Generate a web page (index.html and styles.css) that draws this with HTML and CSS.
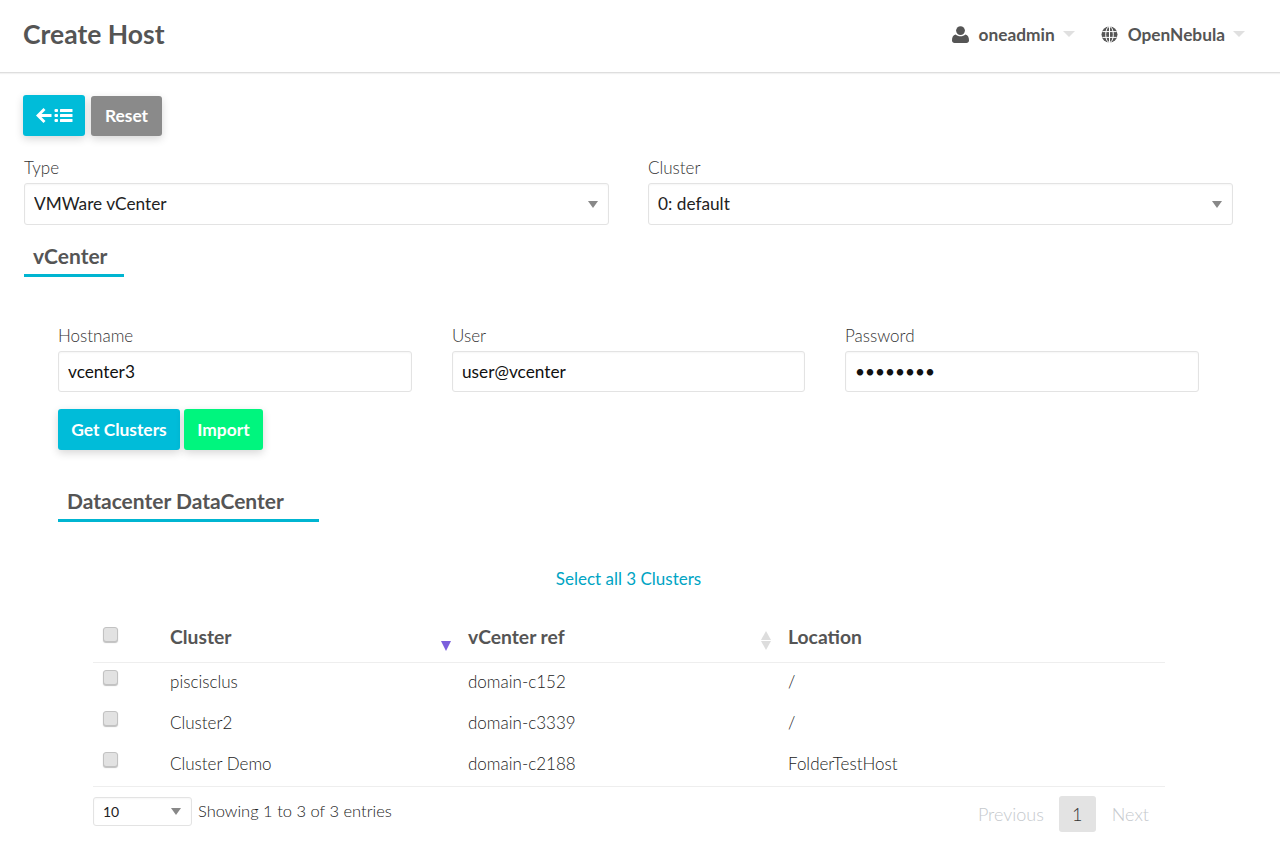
FILE: index.html
```html
<!DOCTYPE html>
<html lang="en">
<head>
  <meta charset="UTF-8" />
  <title>Create Host</title>
  <link rel="stylesheet" href="styles.css">
</head>
<body>

  <header class="topbar">
    <h1>Create Host</h1>
    <nav class="usermenu">
      <span class="menu-item">
        <svg class="menu-icon" viewBox="0 0 17 17" width="17" height="17">
          <circle cx="8.5" cy="4.6" r="4.4" fill="#555"/>
          <path d="M0 14.5c0-3 1-5.5 3.6-6 1.2 1.2 3 1.8 4.9 1.8s3.700-.6 4.900-1.800c2.600.5 3.600 3 3.600 6 0 1.600-1.100 2.500-2.600 2.500H2.600C1.100 17 0 16.100 0 14.500z" fill="#555"/>
        </svg>
        <span class="menu-label">oneadmin</span>
        <span class="menu-caret"></span>
      </span>
      <span class="menu-item">
        <svg class="menu-icon" viewBox="0 0 17 17" width="17" height="17">
          <circle cx="8.500" cy="8.500" r="8" fill="#555"/>
          <g fill="none" stroke="#fff" stroke-width="1">
            <ellipse cx="8.500" cy="8.500" rx="3.800" ry="8"/>
            <path d="M8.500 .5v16M1.300 5.600h14.400M1.300 11.400h14.400"/>
          </g>
        </svg>
        <span class="menu-label">OpenNebula</span>
        <span class="menu-caret"></span>
      </span>
    </nav>
  </header>

  <main class="content">
    <div class="actions">
      <button class="btn btn-back" aria-label="Back to list">
        <svg viewBox="0 0 37 15" width="37" height="15">
          <path d="M7.500 0l2 2-4 4H15.500v3H5.500l4 4-2 2L0 7.500z" fill="#fff"/>
          <g fill="#fff">
            <rect x="18.500" y="1" width="3.500" height="3" rx="1"/>
            <rect x="18.500" y="6" width="3.500" height="3" rx="1"/>
            <rect x="18.500" y="11" width="3.500" height="3" rx="1"/>
            <rect x="24" y="1" width="12.500" height="3" rx=".5"/>
            <rect x="24" y="6" width="12.500" height="3" rx=".5"/>
            <rect x="24" y="11" width="12.500" height="3" rx=".5"/>
          </g>
        </svg>
      </button>
      <button class="btn btn-reset">Reset</button>
    </div>

    <div class="type-row">
      <div class="field">
        <label for="hostType">Type</label>
        <div class="select-wrap">
          <select id="hostType"><option>VMWare vCenter</option></select>
        </div>
      </div>
      <div class="field">
        <label for="hostCluster">Cluster</label>
        <div class="select-wrap">
          <select id="hostCluster"><option>0: default</option></select>
        </div>
      </div>
    </div>

    <h2 class="section-title vcenter-title">vCenter</h2>

    <section class="vcenter">
      <div class="cred-row">
        <div class="field">
          <label for="hostname">Hostname</label>
          <input id="hostname" type="text" value="vcenter3" />
        </div>
        <div class="field">
          <label for="vcUser">User</label>
          <input id="vcUser" type="text" value="user@vcenter" />
        </div>
        <div class="field">
          <label for="vcPass">Password</label>
          <input id="vcPass" type="password" value="password" />
        </div>
      </div>

      <div class="cred-actions">
        <button class="btn btn-get">Get Clusters</button>
        <button class="btn btn-import">Import</button>
      </div>

      <h2 class="section-title dc-title">Datacenter DataCenter</h2>

      <a class="select-all" href="#">Select all 3 Clusters</a>

      <div class="table-box">
        <table class="clusters">
          <thead>
            <tr>
              <th class="col-check"><input type="checkbox" /></th>
              <th class="col-cluster">Cluster<span class="sort-desc"></span></th>
              <th class="col-ref">vCenter ref<span class="sort-both"></span></th>
              <th>Location</th>
            </tr>
          </thead>
          <tbody>
            <tr>
              <td class="col-check"><input type="checkbox" /></td>
              <td>piscisclus</td>
              <td>domain-c152</td>
              <td>/</td>
            </tr>
            <tr>
              <td class="col-check"><input type="checkbox" /></td>
              <td>Cluster2</td>
              <td>domain-c3339</td>
              <td>/</td>
            </tr>
            <tr>
              <td class="col-check"><input type="checkbox" /></td>
              <td>Cluster Demo</td>
              <td>domain-c2188</td>
              <td>FolderTestHost</td>
            </tr>
          </tbody>
        </table>

        <div class="table-footer">
          <div class="length">
            <div class="select-wrap select-small">
              <select><option>10</option></select>
            </div>
            <span class="info">Showing 1 to 3 of 3 entries</span>
          </div>
          <div class="pager">
            <span class="page-link">Previous</span>
            <span class="page-current">1</span>
            <span class="page-link page-next">Next</span>
          </div>
        </div>
      </div>
    </section>
  </main>

</body>
</html>
```

FILE: styles.css
```css
* {
  box-sizing: border-box;
}

body {
  margin: 0;
  font-family: Lato, 'Open Sans', sans-serif;
  font-size: 16px;
  background: #fff;
  color: #555;
}

/* top bar */
.topbar {
  height: 73px;
  padding: 0 35px 4px 23px;
  display: flex;
  align-items: center;
  justify-content: space-between;
  border-bottom: 1px solid #dedede;
  box-shadow: 0 1px 1px rgba(0,0,0,0.05);
}

.topbar h1 {
  margin: 0;
  font-size: 26.500px;
  font-weight: 700;
  color: #555;
}

.usermenu {
  display: flex;
  gap: 26px;
}

.menu-item {
  display: flex;
  align-items: center;
  font-weight: 700;
  font-size: 17.300px;
}

.menu-icon {
  margin-right: 10px;
}

.menu-caret {
  width: 0;
  height: 0;
  margin-left: 8px;
  border-left: 6.500px solid transparent;
  border-right: 6.500px solid transparent;
  border-top: 6.500px solid #e0e0e0;
}

/* buttons */
.content {
  padding: 22px 47px 0 23px;
}

.actions {
  display: flex;
  align-items: flex-end;
  gap: 6px;
}

.btn {
  height: 41px;
  border: none;
  border-radius: 3px;
  color: #fff;
  font-family: inherit;
  font-size: 17.400px;
  font-weight: 700;
  box-shadow: 0 3px 8px rgba(0,0,0,0.16);
}

.btn-back {
  width: 62px;
  padding: 0;
  background: #00bcd9;
  display: flex;
  align-items: center;
  justify-content: center;
}

.btn-reset {
  width: 71px;
  height: 40px;
  padding: 0 0 2px;
  background: #8a8a8a;
}

.btn-get {
  width: 122px;
  padding: 0;
  background: #00bcd9;
}

.btn-import {
  width: 79px;
  padding: 0;
  background: #00f57e;
}

/* form fields */
.field label {
  display: block;
  font-size: 17px;
  font-weight: 300;
  line-height: 20px;
  color: #333;
  margin-bottom: 5px;
}

.type-row {
  display: grid;
  grid-template-columns: 585px 585px;
  column-gap: 39px;
  margin: 22px 0 0 1px;
}

.select-wrap {
  position: relative;
}

.select-wrap::after {
  content: "";
  position: absolute;
  right: 11px;
  top: 18px;
  border-left: 5px solid transparent;
  border-right: 5px solid transparent;
  border-top: 7px solid #888;
  pointer-events: none;
}

select,
input[type=text],
input[type=password] {
  display: block;
  width: 100%;
  height: 42px;
  padding: 0 9px 2px;
  background: #fff;
  border: 1px solid #e3e3e3;
  border-radius: 3px;
  font-family: inherit;
  font-size: 17.250px;
  color: #222;
  appearance: none;
  box-shadow: inset 0 1px 2px rgba(0,0,0,0.04);
}

.section-title {
  margin: 0;
  padding: 0 0 4px 9px;
  border-bottom: 3px solid #00b5d1;
  font-size: 21px;
  font-weight: 700;
  color: #555;
  line-height: 28px;
}

.vcenter-title {
  width: 100px;
  margin: 17px 0 0 1px;
}

.vcenter {
  padding-left: 35px;
}

.cred-row {
  display: grid;
  grid-template-columns: 354px 353px 354px;
  column-gap: 40px;
  margin-top: 49px;
}

.cred-row input {
  height: 41px;
  padding-bottom: 0;
  color: #111;
}

.cred-actions {
  display: flex;
  gap: 4px;
  margin-top: 17px;
}

.dc-title {
  width: 261px;
  margin-top: 37px;
}

.select-all {
  display: block;
  margin-top: 45px;
  text-align: center;
  width: 1141px;
  color: #00a4c4;
  text-decoration: none;
  font-size: 17px;
  font-weight: 400;
  line-height: 24px;
}

/* table */
.table-box {
  margin: 20px 0 0 35px;
  width: 1072px;
}

.clusters {
  width: 100%;
  border-collapse: collapse;
  table-layout: fixed;
}

.clusters th {
  position: relative;
  height: 51px;
  padding: 0 0 0 10px;
  text-align: left;
  font-size: 19.300px;
  font-weight: 700;
  color: #555;
  border-bottom: 1px solid #eee;
}

.clusters td {
  height: 41px;
  padding: 0 0 0 10px;
  font-size: 17px;
  font-weight: 300;
  color: #222;
}

.clusters tbody tr:first-child td {
  height: 40px;
  padding-bottom: 2px;
}

.clusters tbody tr:last-child td {
  border-bottom: 1px solid #eee;
  height: 43px;
  padding-bottom: 2px;
}

.col-check {
  width: 67px;
}

.col-cluster {
  width: 298px;
}

.col-ref {
  width: 320px;
}

input[type=checkbox] {
  appearance: none;
  display: block;
  width: 15px;
  height: 15px;
  margin: -8px 0 0;
  background: #e2e2e2;
  border: 1px solid #c2c2c2;
  border-radius: 3px;
  box-shadow: 0 1px 1px rgba(0,0,0,0.25);
}

.clusters th input[type=checkbox] {
  margin-top: -4px;
}

.sort-desc {
  position: absolute;
  right: 7px;
  top: 30px;
  border-left: 5.500px solid transparent;
  border-right: 5.500px solid transparent;
  border-top: 10px solid #7b5fdc;
}

.sort-both {
  position: absolute;
  right: 7px;
  top: 20px;
  border-left: 5.500px solid transparent;
  border-right: 5.500px solid transparent;
  border-bottom: 9px solid #ddd;
}

.sort-both::after {
  content: "";
  position: absolute;
  left: -5.500px;
  top: 10px;
  border-left: 5.500px solid transparent;
  border-right: 5.500px solid transparent;
  border-top: 9px solid #ddd;
}

/* footer of the table */
.table-footer {
  display: flex;
  justify-content: space-between;
  align-items: flex-start;
  padding-top: 10px;
}

.length {
  display: flex;
  align-items: center;
  gap: 6px;
}

.select-small {
  width: 99px;
}

.select-small select {
  height: 29px;
  font-size: 14px;
  padding: 0 9px;
}

.select-small::after {
  top: 11px;
}

.info {
  font-size: 16.500px;
  font-weight: 300;
  color: #222;
}

.pager {
  display: flex;
  align-items: center;
  gap: 15px;
  margin-top: -1px;
  padding-right: 16px;
  font-size: 18px;
  font-weight: 300;
}

.page-link {
  color: #c5c9cd;
}

.page-next {
  margin-left: 1px;
}

.page-current {
  width: 37px;
  height: 36px;
  background: #e3e3e3;
  border-radius: 3px;
  color: #333;
  display: flex;
  align-items: center;
  justify-content: center;
}
```
